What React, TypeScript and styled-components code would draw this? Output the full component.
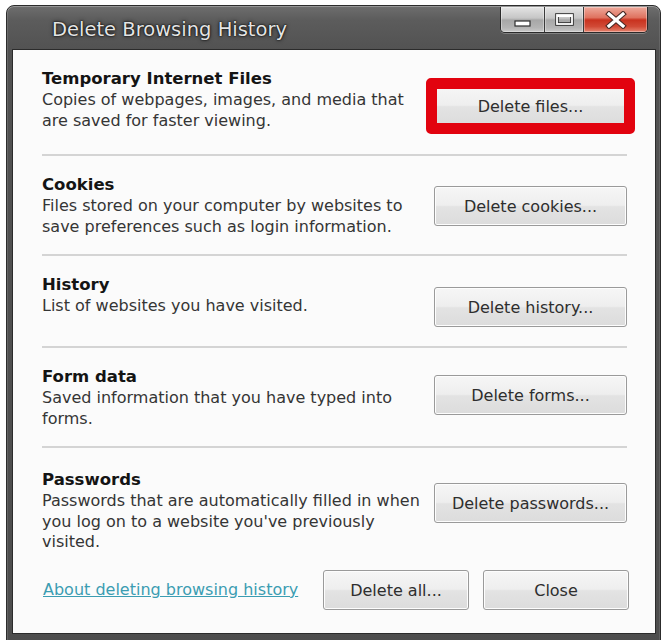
import React from "react";
import styled, { createGlobalStyle } from "styled-components";

const GlobalStyle = createGlobalStyle`
  html, body {
    margin: 0;
    padding: 0;
    background: #ffffff;
    overflow: hidden;
  }
  body {
    font-family: "DejaVu Sans", "Liberation Sans", sans-serif;
  }
`;

const Page = styled.div`
  width: 662px;
  height: 640px;
  box-sizing: border-box;
  padding: 5px 0 0 6px;
  overflow: hidden;
`;

const Window = styled.div`
  width: 655px;
  height: 660px;
  box-sizing: border-box;
  display: flex;
  flex-direction: column;
  padding: 0 4px 0 5px;
  border: 1px solid #2c2c2c;
  border-radius: 8px 8px 0 0;
  background: linear-gradient(to bottom, #6e6e6e 0px, #5c5c5c 14px, #525252 44px, #4d4d4d 100%);
  box-shadow: inset 0 1px 0 rgba(255, 255, 255, 0.28), inset 1px 0 0 rgba(255, 255, 255, 0.12),
    inset -1px 0 0 rgba(255, 255, 255, 0.1);
`;

const TitleBar = styled.div`
  height: 43px;
  display: flex;
  align-items: flex-start;
`;

const Title = styled.div`
  margin: 12px 0 0 40px;
  font-size: 19.5px;
  line-height: 24px;
  color: #e4e4e4;
  text-shadow: 0 0 1px #000, 0 0 2px #111, 0 0 4px #1a1a1a;
  white-space: nowrap;
`;

const CaptionGroup = styled.div`
  margin: 1px 8px 0 auto;
  display: flex;
  border: 1px solid #2a2a2a;
  border-top: none;
  border-radius: 0 0 5px 5px;
  overflow: hidden;
  box-shadow: 0 1px 0 rgba(255, 255, 255, 0.25);
`;

const CaptionButton = styled.div<{ $kind: "min" | "max" | "close" }>`
  height: 25px;
  box-sizing: border-box;
  display: flex;
  justify-content: center;
  width: ${(p) => (p.$kind === "min" ? 43 : p.$kind === "max" ? 39 : 64)}px;
  align-items: ${(p) => (p.$kind === "min" ? "flex-end" : "center")};
  padding-bottom: ${(p) => (p.$kind === "min" ? 5 : 0)}px;
  border-left: ${(p) => (p.$kind === "min" ? "none" : "1px solid #3a3a3a")};
  box-shadow: inset 0 0 0 1px rgba(255, 255, 255, 0.35);
  background: ${(p) =>
    p.$kind === "close"
      ? "linear-gradient(to bottom, #eeaa9c 0%, #df7360 42%, #c9321f 52%, #d14a36 78%, #e5846f 100%)"
      : "linear-gradient(to bottom, #e4e4e4 0%, #c6c6c6 44%, #a7a7a7 52%, #b4b4b4 82%, #c8c8c8 100%)"};
`;

const Panel = styled.div`
  display: flex;
  flex-direction: column;
  border: 1px solid #2b2b2b;
  background: #fbfbfb;
  padding: 0 28px 23px 29px;
`;

const Section = styled.div<{ $height: number; $padTop: number; $divider?: boolean }>`
  box-sizing: border-box;
  height: ${(p) => p.$height}px;
  padding-top: ${(p) => p.$padTop}px;
  display: flex;
  align-items: flex-start;
  justify-content: space-between;
  border-top: ${(p) => (p.$divider ? "2px solid #d4d4d4" : "none")};
`;

const Info = styled.div`
  display: flex;
  flex-direction: column;
`;

const Heading = styled.div`
  font-size: 16.5px;
  font-weight: bold;
  line-height: 22px;
  color: #141414;
  white-space: nowrap;
`;

const Desc = styled.div`
  font-size: 16px;
  line-height: 20.5px;
  color: #353535;
  white-space: nowrap;
`;

const Button = styled.button<{ $width?: number; $top?: number }>`
  box-sizing: border-box;
  width: ${(p) => p.$width ?? 193}px;
  height: 40px;
  margin-top: ${(p) => p.$top ?? 0}px;
  padding: 0;
  font-family: "DejaVu Sans", "Liberation Sans", sans-serif;
  font-size: 16px;
  color: #2e2e2e;
  border: 1px solid #9a9a9a;
  border-radius: 3px;
  background: linear-gradient(to bottom, #f6f6f6 0%, #eeeeee 48%, #e3e3e3 52%, #dcdcdc 100%);
  box-shadow: inset 0 0 0 1px #fdfdfd;
  flex-shrink: 0;
`;

const Highlight = styled.div<{ $top: number }>`
  position: relative;
  margin-top: ${(p) => p.$top}px;
  flex-shrink: 0;
  display: flex;

  &::after {
    content: "";
    position: absolute;
    inset: -8px;
    border: 11px solid #e2030f;
    border-radius: 5px;
    pointer-events: none;
  }
`;

const Footer = styled.div`
  height: 40px;
  display: flex;
  align-items: center;
  margin-right: -2px;
`;

const HelpLink = styled.a`
  font-size: 16px;
  line-height: 20px;
  color: #3b9db2;
  text-decoration: underline;
  white-space: nowrap;
  margin-left: 1px;
`;

const FooterButtons = styled.div`
  margin-left: auto;
  display: flex;
  gap: 14px;
`;

const MinimizeGlyph = () => (
  <svg width="17" height="7" viewBox="0 0 17 7">
    <rect x="1" y="1" width="15" height="5" fill="#ffffff" stroke="#2e2e2e" strokeWidth="1.2" />
  </svg>
);

const MaximizeGlyph = () => (
  <svg width="19" height="13" viewBox="0 0 19 13">
    <rect x="2" y="2" width="15" height="9" fill="none" stroke="#2e2e2e" strokeWidth="3.6" />
    <rect x="2" y="2" width="15" height="9" fill="none" stroke="#ffffff" strokeWidth="1.8" />
    <rect x="2" y="2" width="15" height="2" fill="#ffffff" />
  </svg>
);

const CloseGlyph = () => (
  <svg width="24" height="18" viewBox="0 0 24 18">
    <path d="M5 3 L19 15 M19 3 L5 15" stroke="#4a2a25" strokeWidth="5.4" strokeLinecap="square" />
    <path d="M5 3 L19 15 M19 3 L5 15" stroke="#ffffff" strokeWidth="3.2" strokeLinecap="square" />
  </svg>
);

type Row = {
  heading: string;
  lines: string[];
  action: string;
  height: number;
  padTop: number;
  buttonTop: number;
  highlighted?: boolean;
};

const rows: Row[] = [
  {
    heading: "Temporary Internet Files",
    lines: ["Copies of webpages, images, and media that", "are saved for faster viewing."],
    action: "Delete files...",
    height: 104,
    padTop: 18,
    buttonTop: 18,
    highlighted: true,
  },
  {
    heading: "Cookies",
    lines: ["Files stored on your computer by websites to", "save preferences such as login information."],
    action: "Delete cookies...",
    height: 100,
    padTop: 18,
    buttonTop: 12,
  },
  {
    heading: "History",
    lines: ["List of websites you have visited."],
    action: "Delete history...",
    height: 92,
    padTop: 18,
    buttonTop: 13,
  },
  {
    heading: "Form data",
    lines: ["Saved information that you have typed into", "forms."],
    action: "Delete forms...",
    height: 100,
    padTop: 18,
    buttonTop: 9,
  },
  {
    heading: "Passwords",
    lines: [
      "Passwords that are automatically filled in when",
      "you log on to a website you've previously",
      "visited.",
    ],
    action: "Delete passwords...",
    height: 124,
    padTop: 21,
    buttonTop: 14,
  },
];

export default function App() {
  return (
    <>
      <GlobalStyle />
      <Page>
        <Window>
          <TitleBar>
            <Title>Delete Browsing History</Title>
            <CaptionGroup>
              <CaptionButton $kind="min">
                <MinimizeGlyph />
              </CaptionButton>
              <CaptionButton $kind="max">
                <MaximizeGlyph />
              </CaptionButton>
              <CaptionButton $kind="close">
                <CloseGlyph />
              </CaptionButton>
            </CaptionGroup>
          </TitleBar>
          <Panel>
            {rows.map((row, i) => (
              <Section key={row.heading} $height={row.height} $padTop={row.padTop} $divider={i > 0}>
                <Info>
                  <Heading>{row.heading}</Heading>
                  {row.lines.map((line) => (
                    <Desc key={line}>{line}</Desc>
                  ))}
                </Info>
                {row.highlighted ? (
                  <Highlight $top={row.buttonTop}>
                    <Button>{row.action}</Button>
                  </Highlight>
                ) : (
                  <Button $top={row.buttonTop}>{row.action}</Button>
                )}
              </Section>
            ))}
            <Footer>
              <HelpLink href="#">About deleting browsing history</HelpLink>
              <FooterButtons>
                <Button $width={146}>Delete all...</Button>
                <Button $width={146}>Close</Button>
              </FooterButtons>
            </Footer>
          </Panel>
        </Window>
      </Page>
    </>
  );
}
